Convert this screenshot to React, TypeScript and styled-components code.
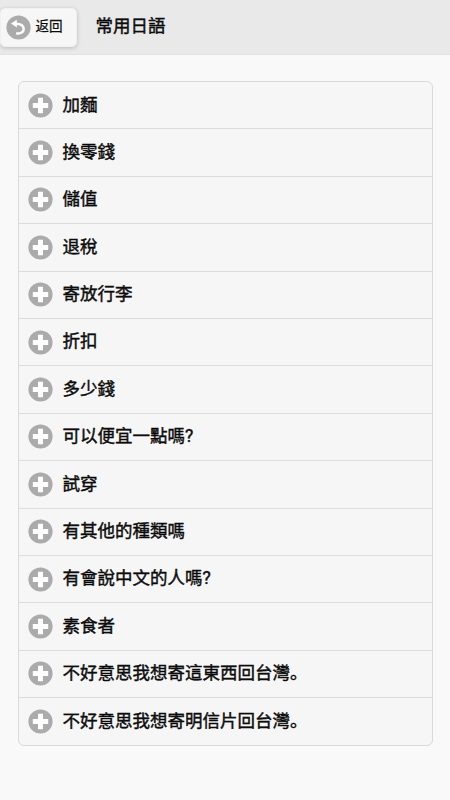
import React from 'react';
import styled, { createGlobalStyle } from 'styled-components';

const GlobalStyle = createGlobalStyle`
  * { box-sizing: border-box; }
  body {
    margin: 0;
    background: #f9f9f9;
    color: #111;
    font-family: Roboto, "Noto Sans CJK SC", sans-serif;
  }
`;

const Page = styled.div`
  min-height: 800px;
  background: #f9f9f9;
`;

const Header = styled.header`
  display: flex;
  align-items: flex-start;
  height: 55px;
  padding: 8px 0 0 0;
  background: #e9e9e9;
  border-bottom: 1px solid #e2e2e2;
`;

const BackButton = styled.button`
  display: flex;
  align-items: center;
  gap: 4.5px;
  width: 77px;
  height: 39px;
  padding: 0 0 0 5px;
  border: 1px solid #f0f0f0;
  border-radius: 5px;
  background: #f6f6f6;
  box-shadow: 0 1px 4px rgba(0, 0, 0, 0.2);
  color: #111;
  font: inherit;
`;

const BackLabel = styled.span`
  margin-top: -4px;
  font-size: 13.6px;
  line-height: 20px;
  -webkit-text-stroke: 0.25px #000;
`;

const Title = styled.h1`
  margin: 5px 0 0 18.5px;
  font-size: 17.5px;
  font-weight: 400;
  line-height: 26px;
  -webkit-text-stroke: 0.4px #000;
`;

const List = styled.ul`
  list-style: none;
  margin: 26px 17px 0 17.5px;
  padding: 0;
  border: 1px solid #d9d9d9;
  border-radius: 6px;
  background: #f6f6f6;
`;

const Row = styled.li`
  display: flex;
  align-items: center;
  gap: 10px;
  height: 47.4px;
  padding-left: 9px;
  border-bottom: 1px solid #dcdcdc;

  &:last-child { border-bottom: 0; }
`;

const Phrase = styled.span`
  margin-top: -1.4px;
  font-size: 17.5px;
  line-height: 26px;
  white-space: nowrap;
  -webkit-text-stroke: 0.4px #000;
`;

const Icon = styled.svg`
  display: block;
  flex: none;
  width: 25px;
  height: 25px;
`;

const PlusIcon = () => (
  <Icon viewBox="0 0 25 25">
    <circle cx="12.5" cy="12.5" r="12.1" fill="#ababab" />
    <path d="M12.5 4.8v15.4M4.8 12.5h15.4" stroke="#fff" strokeWidth="5" />
  </Icon>
);

const BackIcon = () => (
  <Icon viewBox="0 0 25 25">
    <circle cx="12.5" cy="12.5" r="12.1" fill="#ababab" />
    <path d="M5 8.6 10.8 4.7v7.8z" fill="#fff" />
    <path d="M9.5 8.8C15 8.7 17.7 10.8 17.7 13.9C17.7 17 15 18.7 10.2 18.6" fill="none" stroke="#fff" strokeWidth="2.5" />
  </Icon>
);

const phrases = [
  '加麵', '換零錢', '儲值', '退稅', '寄放行李', '折扣', '多少錢',
  '可以便宜一點嗎?', '試穿', '有其他的種類嗎', '有會說中文的人嗎?', '素食者',
  '不好意思我想寄這東西回台灣。', '不好意思我想寄明信片回台灣。',
];

export default function App() {
  return (
    <Page lang="zh-Hans">
      <GlobalStyle />
      <Header>
        <BackButton type="button">
          <BackIcon />
          <BackLabel>返回</BackLabel>
        </BackButton>
        <Title>常用日語</Title>
      </Header>
      <List>
        {phrases.map((phrase) => (
          <Row key={phrase}>
            <PlusIcon />
            <Phrase>{phrase}</Phrase>
          </Row>
        ))}
      </List>
    </Page>
  );
}
